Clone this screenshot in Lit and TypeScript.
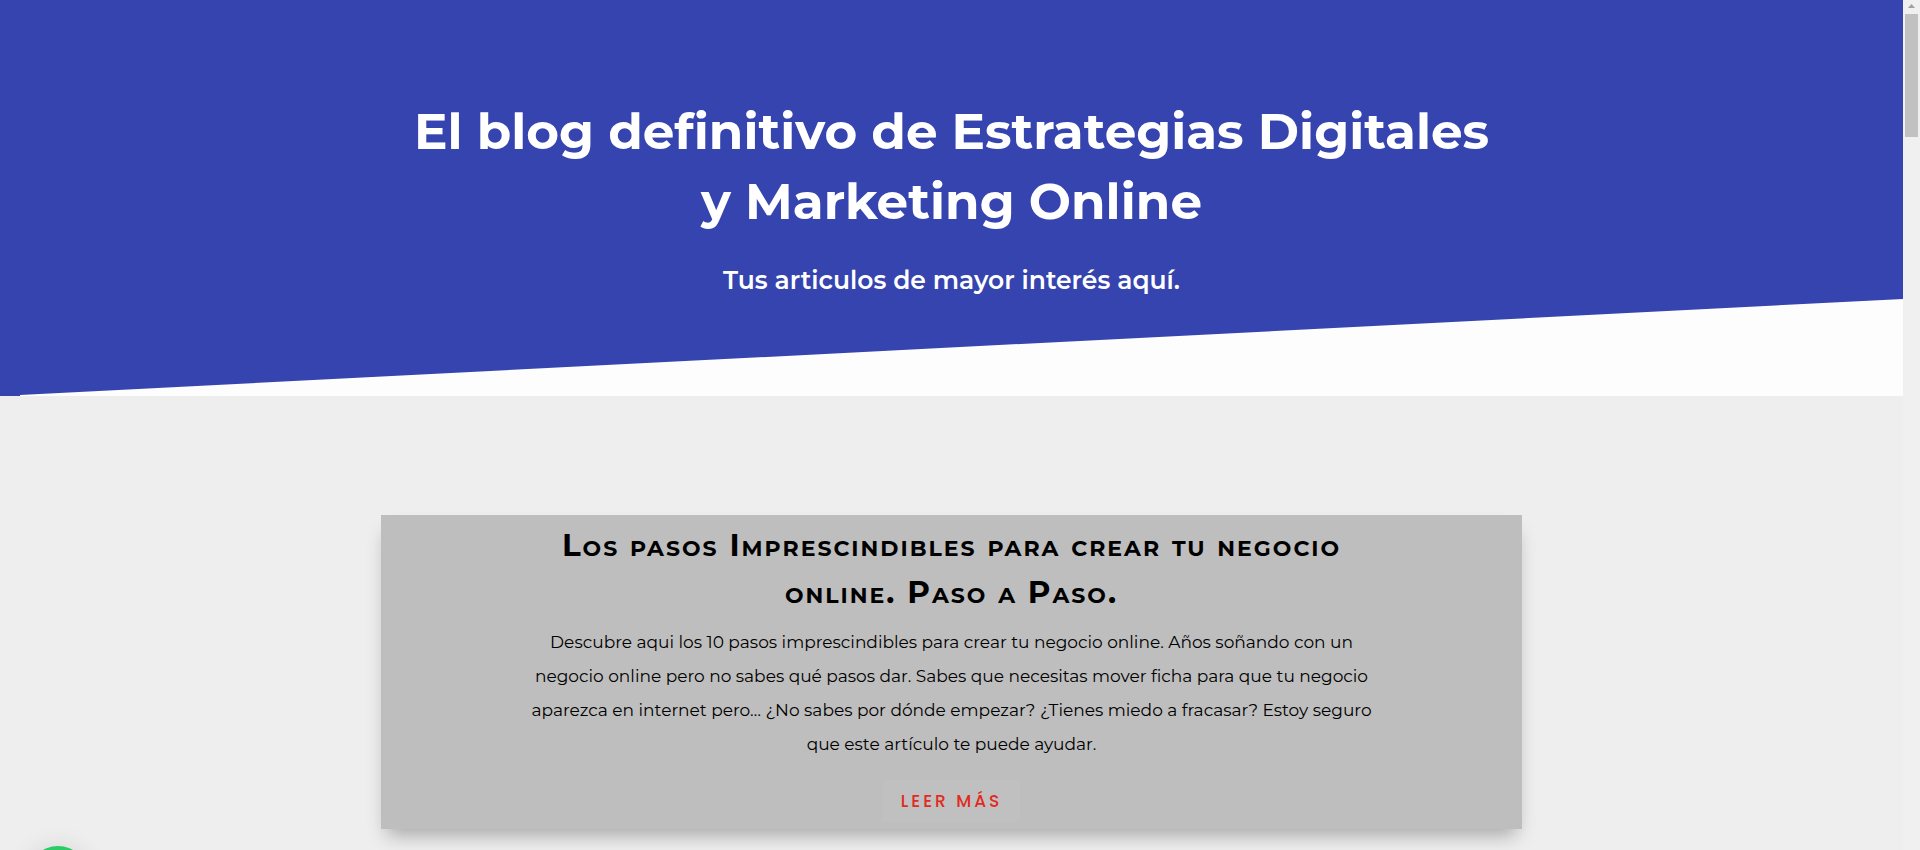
import { LitElement, html, css } from "lit";
import { customElement } from "lit/decorators.js";

@customElement("app-root")
export class AppRoot extends LitElement {
  static styles = css`
    :host {
      display: flex;
      height: 100vh;
      overflow: hidden;
      font-family: Montserrat, Inter, "Open Sans", sans-serif;
      background: #eee;
    }
    .page {
      position: relative;
      flex: 1;
      min-width: 0;
      overflow: hidden;
    }
    h1, h2, p {
      margin: 0;
    }
    .hero {
      background: #3544ae;
      color: #fff;
      text-align: center;
      padding-top: 97px;
    }
    .hero-title {
      font-size: 50px;
      line-height: 70px;
      font-weight: 700;
    }
    .hero-sub {
      margin-top: 24px;
      font-size: 25px;
      line-height: 38px;
      font-weight: 600;
    }
    .slant {
      display: block;
      width: 100%;
      height: 97px;
    }
    .posts {
      padding-top: 119px;
    }
    .card {
      width: 60%;
      margin: 0 auto;
      padding: 7px 0;
      box-sizing: border-box;
      background: #bebebe;
      box-shadow: 0 12px 18px -6px rgba(0, 0, 0, 0.3);
      text-align: center;
      color: #000;
    }
    .card-title {
      font-size: 31px;
      line-height: 47px;
      font-weight: 700;
      text-transform: uppercase;
      letter-spacing: 2px;
    }
    .small {
      font-size: 22px;
      line-height: 1;
    }
    .card-text {
      margin-top: 9px;
      font-size: 17px;
      line-height: 34px;
      font-weight: 400;
    }
    .more {
      display: inline-block;
      margin-top: 19px;
      padding: 0 18px;
      font-size: 17px;
      line-height: 42px;
      font-weight: 500;
      font-family: Poppins, Montserrat, "Open Sans", sans-serif;
      letter-spacing: 3px;
      text-transform: uppercase;
      text-decoration: none;
      color: #e02b20;
      background: #c0c0c0;
    }
    .chat {
      position: absolute;
      left: 28px;
      bottom: -56px;
      width: 60px;
      height: 60px;
      padding: 0;
      border: 0;
      border-radius: 50%;
      background: #2bcb66;
      box-shadow: 0 0 24px rgba(0, 0, 0, 0.1);
    }
    .scrollbar {
      width: 17px;
      box-sizing: border-box;
      padding: 0 2px;
      background: #f0f0f0;
    }
    .arrow {
      display: block;
      width: 13px;
      height: 14px;
    }
    .thumb {
      height: 123px;
      background: #c1c1c1;
    }
  `;

  // Words render as small capitals; initials, spaces and full stops keep the full size.
  private smallCaps(text: string) {
    return text
      .split(/([a-z]+)/)
      .map((part) =>
        /^[a-z]/.test(part) ? html`<span class="small">${part}</span>` : part
      );
  }

  render() {
    return html`
      <main class="page">
        <header class="hero">
          <h1 class="hero-title">
            El blog definitivo de Estrategias Digitales<br />y Marketing Online
          </h1>
          <p class="hero-sub">Tus articulos de mayor interés aquí.</p>
          <svg class="slant" viewBox="0 0 1903 97" preserveAspectRatio="none" aria-hidden="true">
            <path d="M20 96L1903 0V97H20Z" fill="#fdfdfd" />
          </svg>
        </header>
        <section class="posts">
          <article class="card">
            <h2 class="card-title">
              ${this.smallCaps("Los pasos Imprescindibles para crear tu negocio")}<br />
              ${this.smallCaps("online. Paso a Paso.")}
            </h2>
            <p class="card-text">
              Descubre aqui los 10 pasos imprescindibles para crear tu negocio online. Años soñando con un<br />
              negocio online pero no sabes qué pasos dar. Sabes que necesitas mover ficha para que tu negocio<br />
              aparezca en internet pero… ¿No sabes por dónde empezar? ¿Tienes miedo a fracasar? Estoy seguro<br />
              que este artículo te puede ayudar.
            </p>
            <a class="more" href="#">Leer más</a>
          </article>
        </section>
        <button class="chat" type="button" aria-label="WhatsApp"></button>
      </main>
      <div class="scrollbar" aria-hidden="true">
        <svg class="arrow" viewBox="0 0 13 14">
          <path d="M3 8L6.500 4L10 8Z" fill="#a0a0a0" />
        </svg>
        <div class="thumb"></div>
      </div>
    `;
  }
}
